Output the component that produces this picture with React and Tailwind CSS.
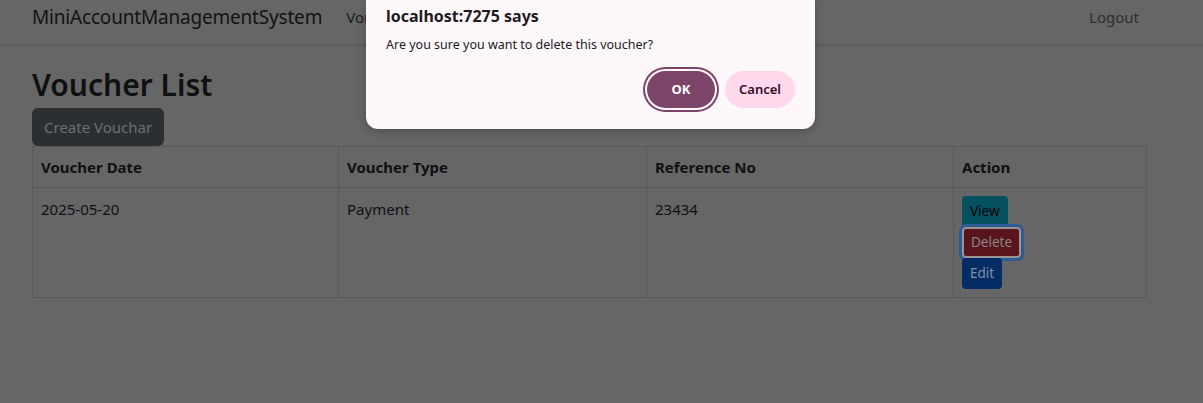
export default function App() {
  const font = "font-['Segoe_UI','Noto_Sans','Liberation_Sans',sans-serif]";

  return (
    <div className={`relative min-h-[403px] bg-[#666666] ${font}`}>
      {/* navbar */}
      <nav className="h-[45px] border-b border-[#5b5b5b] pb-[10px] shadow-[0_1px_2px_rgba(0,0,0,0.08)]">
        <div className="mx-[32px] flex h-full w-[1115px] items-center">
          <span className="text-[19px] leading-[28px] tracking-[-0.01em] text-[#121212]">MiniAccountManagementSystem</span>
          <span className="ml-[24px] text-[15px] text-[#171b20]">Voucher</span>
          <span className="ml-auto px-[8px] text-[15px] text-[#2f2f2f]">Logout</span>
        </div>
      </nav>

      <main className="mx-[32px] w-[1115px] pt-[17px]">
        <h2 className="text-[30px] font-semibold leading-[46px] text-[#0f1012]">Voucher List</h2>
        <button className="rounded-[6px] bg-[#2b2f32] px-[12px] py-[6px] text-[15px] leading-[26px] text-[#707070]">
          Create Vouchar
        </button>

        <table className="w-full border-collapse text-[15px] text-[#0f1012]">
          <thead>
            <tr>
              <th className="w-[306px] border border-[#595a5c] px-[8px] py-[8px] text-left font-bold leading-[24px]">Voucher Date</th>
              <th className="w-[308px] border border-[#595a5c] px-[8px] py-[8px] text-left font-bold leading-[24px]">Voucher Type</th>
              <th className="w-[307px] border border-[#595a5c] px-[8px] py-[8px] text-left font-bold leading-[24px]">Reference No</th>
              <th className="border border-[#595a5c] px-[8px] py-[8px] text-left font-bold leading-[24px]">Action</th>
            </tr>
          </thead>
          <tbody>
            <tr>
              <td className="border border-[#595a5c] px-[8px] py-[8px] align-top leading-[26px]">2025-05-20</td>
              <td className="border border-[#595a5c] px-[8px] py-[8px] align-top leading-[26px]">Payment</td>
              <td className="border border-[#595a5c] px-[8px] py-[8px] align-top leading-[26px]">23434</td>
              <td className="border border-[#595a5c] px-[8px] py-[8px] align-top">
                <div className="flex flex-col items-start">
                  <button className="h-[31px] rounded-[4px] bg-[#055160] px-[8px] text-[13.5px] text-black">View</button>
                  <button className="h-[31px] rounded-[4px] border-2 border-[#9a9494] bg-[#58151c] px-[7px] text-[13.5px] text-[#8e8585] outline-[3px] outline-solid outline-[#2f5c94]">
                    Delete
                  </button>
                  <button className="h-[31px] rounded-[4px] bg-[#052c65] px-[8px] text-[13.5px] text-[#8090a8]">Edit</button>
                </div>
              </td>
            </tr>
          </tbody>
        </table>
      </main>

      {/* browser confirm dialog */}
      <div className="absolute left-[366px] top-0 w-[449px] rounded-b-[12px] bg-[#fff8fb] px-[20px] pb-[21px] pt-[5px] shadow-[0_2px_8px_rgba(0,0,0,0.25)]">
        <div className="text-[16px] font-bold leading-[22px] text-[#1e1a1d]">localhost:7275 says</div>
        <div className="mt-[9px] text-[12.5px] leading-[18px] text-[#1e1a1d]">Are you sure you want to delete this voucher?</div>
        <div className="mt-[17px] flex justify-end gap-[10px]">
          <button className="h-[37px] w-[68px] rounded-full bg-[#7b4468] text-[13px] font-bold text-white shadow-[0_0_0_2px_#fff8fb,0_0_0_4px_#7b4468]">
            OK
          </button>
          <button className="h-[37px] w-[70px] rounded-full bg-[#ffd8ec] text-[13px] font-semibold text-[#31101f]">
            Cancel
          </button>
        </div>
      </div>
    </div>
  );
}
